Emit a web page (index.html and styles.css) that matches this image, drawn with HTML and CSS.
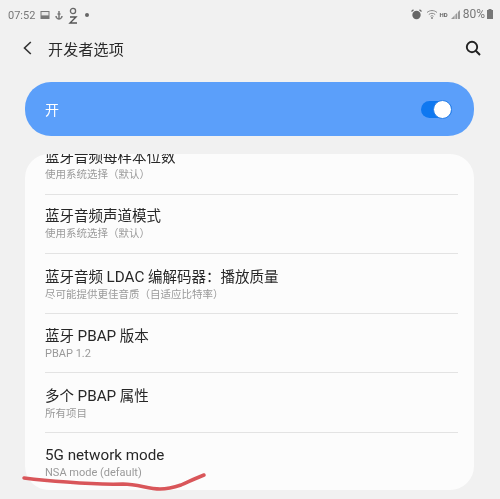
FILE: index.html
```html
<!DOCTYPE html>
<html lang="zh">
<head>
<meta charset="utf-8">
<title>开发者选项</title>
<link rel="stylesheet" href="styles.css">
</head>
<body>
<div class="status">
  <div class="status-left">
    <span class="time">07:52</span>
    <svg class="ic" width="10" height="10" viewBox="0 0 10 10"><rect x="0.500" y="1" width="9" height="8" fill="#777"/><rect x="1.500" y="2" width="7" height="3.400" fill="#e8e8e8"/></svg>
    <svg class="ic" width="8" height="10" viewBox="0 0 8 10"><path d="M4 1v8M1 6c0 2 2 3 3 3s3-1 3-3M2.500 4h3" stroke="#777" stroke-width="1.500" fill="none"/></svg>
    <svg class="ic" width="10" height="17" viewBox="0 0 10 17"><circle cx="5" cy="4" r="2.600" stroke="#666" stroke-width="1.300" fill="none"/><path d="M2 10h6L2 16h7" stroke="#555" stroke-width="1.400" fill="none"/></svg>
    <span class="dot"></span>
  </div>
  <div class="status-right">
    <svg width="11" height="11" viewBox="0 0 11 11"><circle cx="5.500" cy="6" r="4.200" fill="#666"/><path d="M0.500 2.500 2.500 0.800M10.500 2.500 8.500 0.800" stroke="#666" stroke-width="1.300"/></svg>
    <svg class="wifi" width="12" height="10" viewBox="0 0 12 10"><path d="M1 3.500c3-2.600 7-2.600 10 0M2.800 5.500c2-1.600 4.400-1.600 6.400 0M4.500 7.300c1-.8 2-.8 3 0" stroke="#888" stroke-width="1" fill="none"/><circle cx="6" cy="9" r="0.900" fill="#777"/></svg>
    <span class="hd">HD</span>
    <svg width="10" height="11" viewBox="0 0 10 11"><path d="M10 1v9H1z" fill="#999"/><path d="M7.500 3v7M5 6v4" stroke="#efefef" stroke-width="0.800"/></svg>
    <span class="pct">80%</span>
    <svg width="6" height="10" viewBox="0 0 6 10"><rect x="0" y="1" width="6" height="9" fill="#777"/><rect x="1.500" y="0" width="3" height="1" fill="#777"/></svg>
  </div>
</div>

<header class="appbar">
  <svg class="back" width="9" height="14" viewBox="0 0 9 14"><path d="M7.800 1 1.500 7l6.300 6" stroke="#333" stroke-width="1.600" fill="none"/></svg>
  <h1 class="title">开发者选项</h1>
  <svg class="search" width="16" height="16" viewBox="0 0 16 16"><circle cx="7" cy="7" r="5.200" stroke="#222" stroke-width="1.900" fill="none"/><path d="M10.800 10.800 15 15" stroke="#222" stroke-width="2" fill="none"/></svg>
</header>

<section class="master">
  <span class="master-label">开</span>
  <span class="switch"><span class="knob"></span></span>
</section>

<main class="card">
  <div class="list">
    <div class="row">
      <div class="row-title">蓝牙音频每样本位数</div>
      <div class="row-sub">使用系统选择（默认）</div>
    </div>
    <div class="row">
      <div class="row-title">蓝牙音频声道模式</div>
      <div class="row-sub">使用系统选择（默认）</div>
    </div>
    <div class="row">
      <div class="row-title">蓝牙音频 <span class="latin">LDAC</span> 编解码器：播放质量</div>
      <div class="row-sub">尽可能提供更佳音质（自适应比特率）</div>
    </div>
    <div class="row">
      <div class="row-title">蓝牙 <span class="latin">PBAP</span> 版本</div>
      <div class="row-sub"><span class="latin">PBAP 1.2</span></div>
    </div>
    <div class="row">
      <div class="row-title">多个 <span class="latin">PBAP</span> 属性</div>
      <div class="row-sub">所有项目</div>
    </div>
    <div class="row">
      <div class="row-title"><span class="latin">5G network mode</span></div>
      <div class="row-sub"><span class="latin">NSA mode (default)</span></div>
    </div>
  </div>
</main>

<svg class="scribble" width="500" height="499" viewBox="0 0 500 499"><path d="M24 478C40 480 52 481 67 482C85 483.500 105 484.500 123 484C138 484 148 489 160 489C168 489 175 487 181 485C189 481.500 196 478 204 475" stroke="#d9565a" stroke-width="3.500" stroke-linecap="round" fill="none"/></svg>
</body>
</html>
```
FILE: styles.css
```css
* { box-sizing: border-box; }
html, body { margin: 0; padding: 0; }
body {
  width: 500px;
  height: 499px;
  overflow: hidden;
  position: relative;
  background: #f1f1f1;
  font-family: Roboto, "Noto Sans CJK SC", sans-serif;
  color: #252525;
  filter: blur(0.3px);
}
.status {
  height: 30px;
  padding: 5px 7px 0 8px;
  display: flex;
  justify-content: space-between;
  align-items: flex-start;
}
.status-left { display: flex; align-items: center; gap: 5px; height: 20px; }
.status-right { display: flex; align-items: center; gap: 2px; height: 20px; margin-top: -1px; }
.time { font-size: 11px; color: #777; }
.dot { width: 4px; height: 4px; border-radius: 50%; background: #666; margin-left: 2px; }
.hd { font-size: 6px; font-weight: 700; color: #666; }
.pct { font-size: 12px; color: #777; margin-left: 1px; }
.wifi { margin: 0 0 0 2px; }
.appbar {
  height: 36px;
  padding: 0 19px 0 23px;
  display: flex;
  align-items: center;
}
.title {
  flex: 1;
  margin: 0 0 0 16px;
  font-size: 15px;
  font-weight: 400;
  color: #2a2a2a;
  letter-spacing: 0.2px;
}
.master {
  margin: 16px 26px 0 25px;
  height: 54px;
  border-radius: 26px;
  background: #5b9ffa;
  padding: 0 22px 0 20px;
  display: flex;
  align-items: center;
  justify-content: space-between;
}
.master-label { color: #fff; font-size: 14px; }
.switch {
  width: 31px;
  height: 17px;
  border-radius: 9px;
  background: #0f78f0;
  display: flex;
  justify-content: flex-end;
  align-items: center;
}
.knob {
  flex: none;
  width: 19px;
  height: 19px;
  border-radius: 50%;
  background: #fff;
  border: 1px solid #2a80e8;
}
.card {
  margin: 18px 26px 0 25px;
  height: 336px;
  background: #fcfcfc;
  border-radius: 24px;
  overflow: hidden;
}
.list { margin-top: -19px; padding: 0 16px 0 20px; }
.row {
  height: 59.500px;
  padding-top: 12.500px;
  border-bottom: 1px solid #e3e3e3;
}
.row:last-child { border-bottom: 0; }
.row-title { font-size: 14.500px; line-height: 20px; color: #272727; }
.row-title .latin { font-size: 15.200px; }
.row-sub { font-size: 10.500px; line-height: 14px; color: #9a9a9a; }
.row-sub .latin { font-size: 11px; }
.scribble { position: absolute; left: 0; top: 0; pointer-events: none; }
```
